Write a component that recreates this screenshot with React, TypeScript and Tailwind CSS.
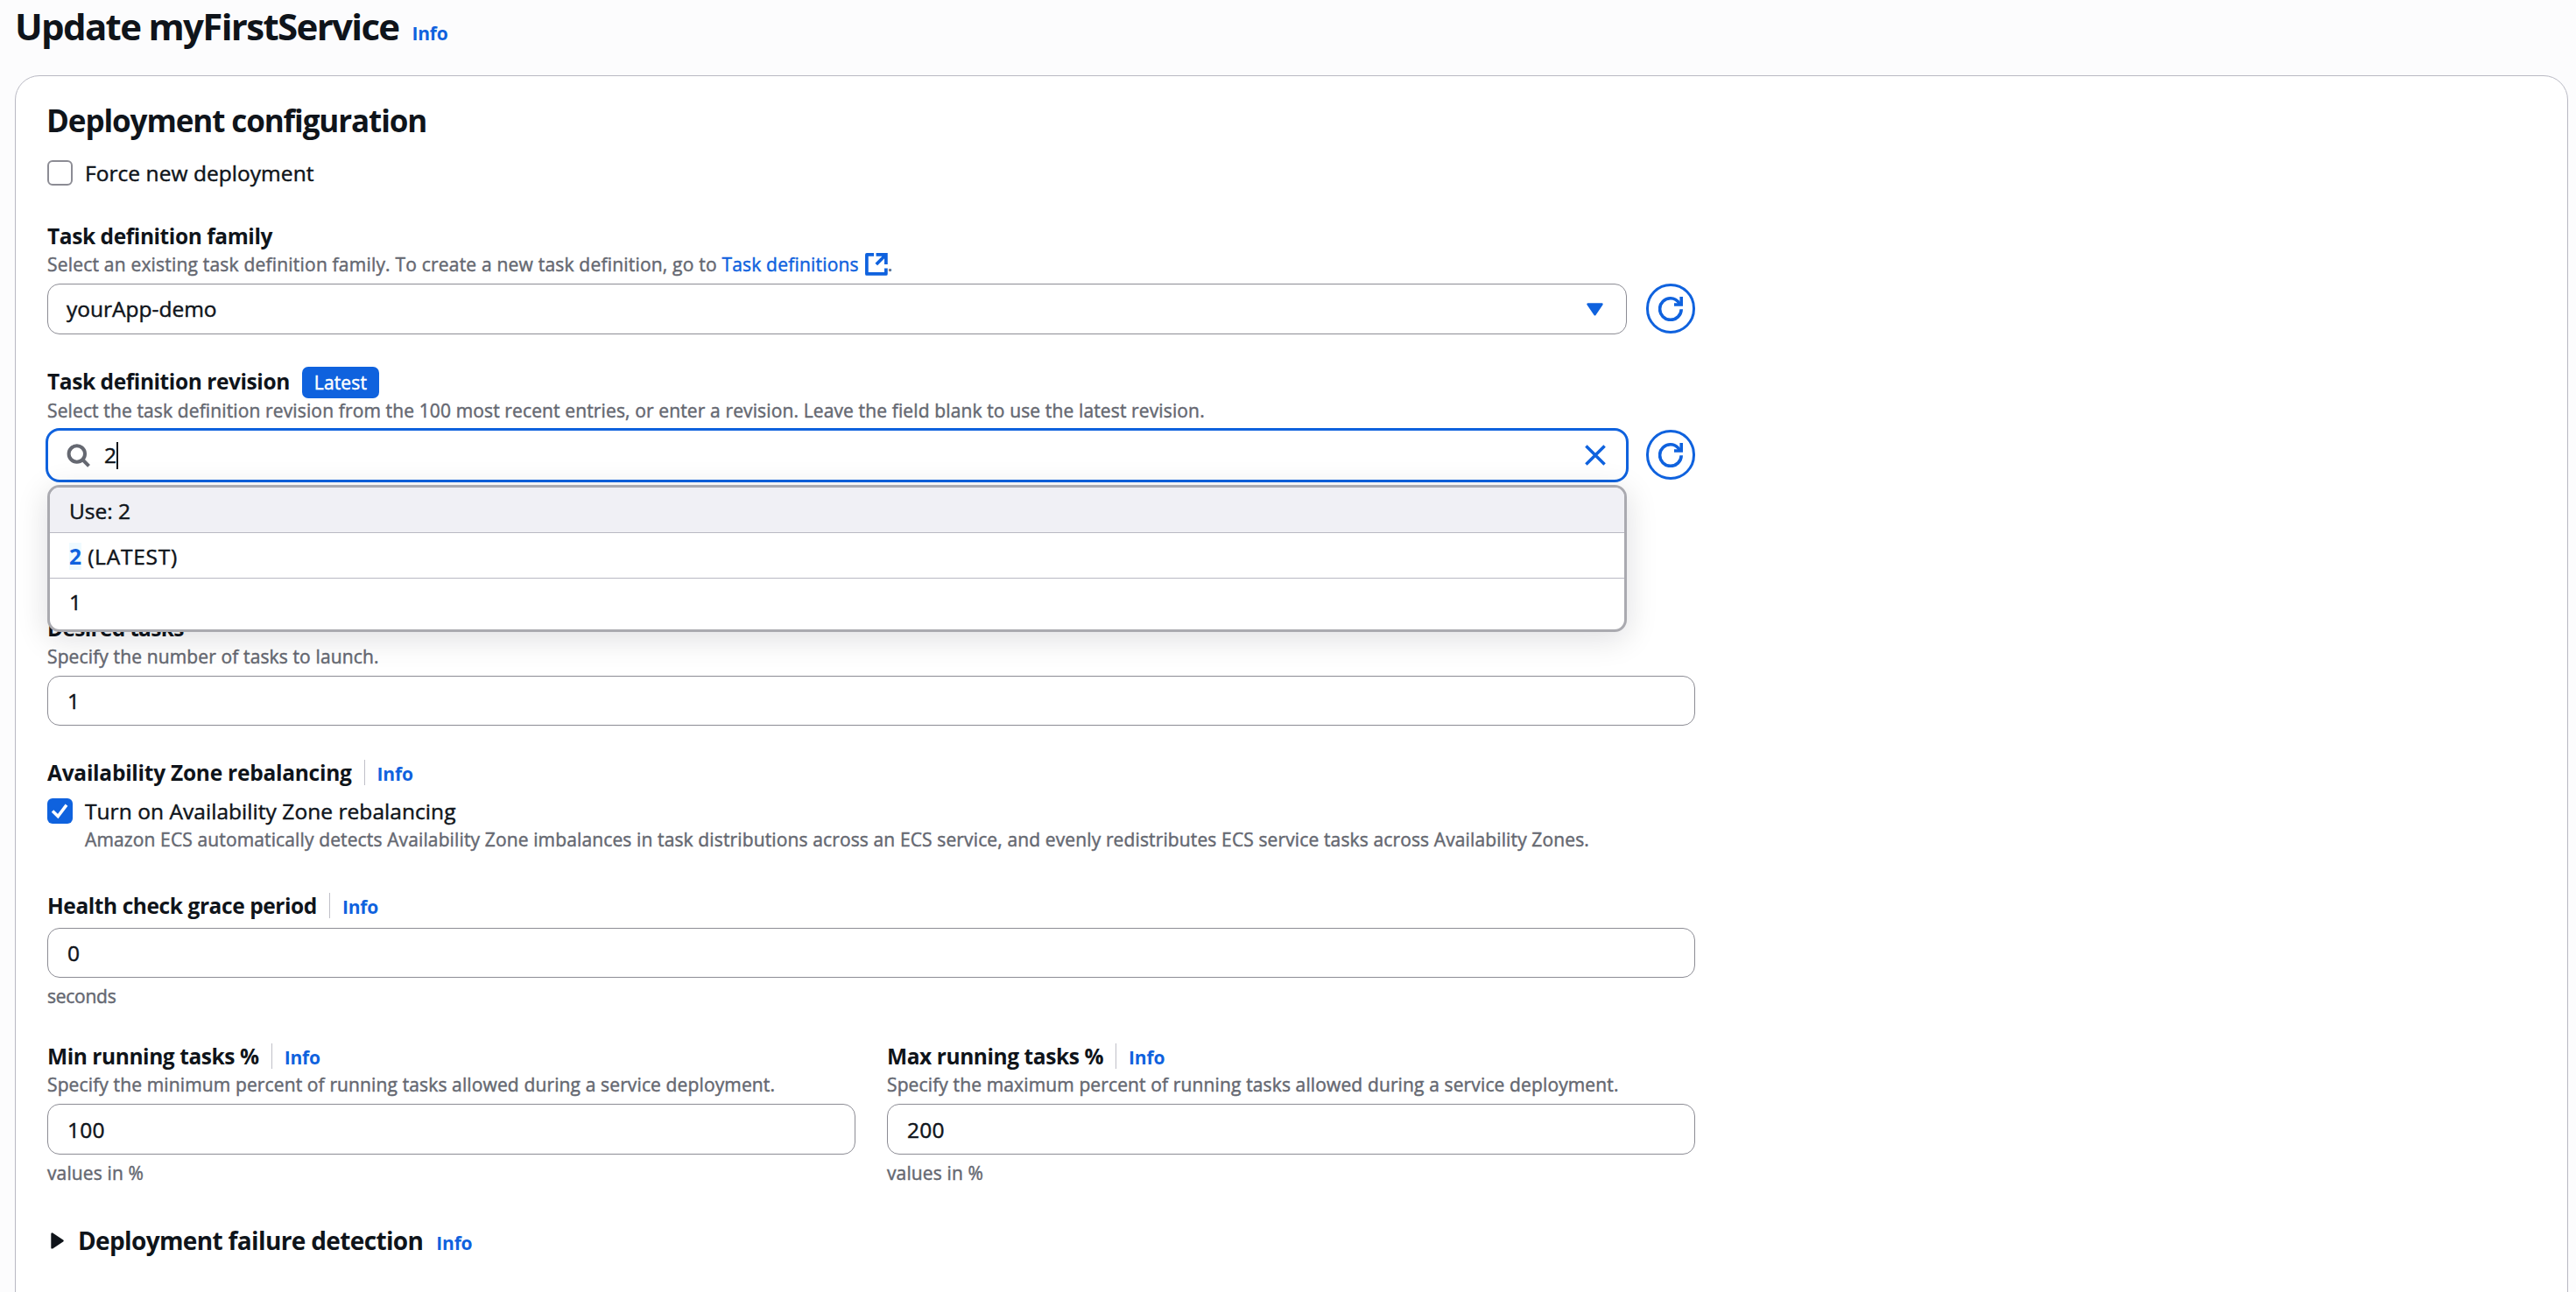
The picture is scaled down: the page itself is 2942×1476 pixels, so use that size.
import { useState, type ReactNode } from 'react'
import clsx from 'clsx'

const OPTIONS = [
  { match: '', text: 'Use: 2' },
  { match: '2', text: ' (LATEST)' },
  { match: '', text: '1' },
]

function ExternalIcon() {
  return (
    <svg
      viewBox="0 0 26 26"
      className="ml-[7px] inline-block h-[26px] w-[26px] align-[-5px]"
      fill="none"
      stroke="currentColor"
      strokeWidth="3.7"
      strokeLinejoin="round"
    >
      <path d="M10 1.9H1.9v22h22v-6.4" />
      <path d="M12.6 1.9h11.3V13M23.5 2.3 12.8 13" strokeLinejoin="miter" />
    </svg>
  )
}

function SearchIcon() {
  return (
    <svg
      viewBox="0 0 28 28"
      className="h-7 w-7 shrink-0 text-[#656871]"
      fill="none"
      stroke="currentColor"
      strokeWidth="4"
    >
      <circle cx="12.8" cy="12.5" r="9.2" />
      <path d="m19.2 19 7.3 7.3" />
    </svg>
  )
}

function CloseIcon() {
  return (
    <svg
      viewBox="0 0 24 24"
      className="h-6 w-6 shrink-0 text-[#0f62de]"
      fill="none"
      stroke="currentColor"
      strokeWidth="3.5"
    >
      <path d="m1.4 1.4 21.2 21.2M22.6 1.4 1.4 22.6" />
    </svg>
  )
}

function CaretDown() {
  return (
    <svg
      viewBox="0 0 19 15"
      className="h-[15px] w-[19px] shrink-0 text-[#0f62de]"
      fill="currentColor"
      stroke="currentColor"
      strokeWidth="2.4"
      strokeLinejoin="round"
    >
      <path d="M1.5 1.5h16l-8 11.8z" />
    </svg>
  )
}

function RefreshButton({ className }: { className?: string }) {
  return (
    <button
      className={clsx(
        'flex h-[57px] w-14 shrink-0 items-center justify-center rounded-full border-[3px] border-[#0f62de] text-[#0f62de]',
        className,
      )}
      aria-label="Refresh"
    >
      <svg
        viewBox="0 0 28 28"
        className="h-7 w-7"
        fill="none"
        stroke="currentColor"
        strokeWidth="3.6"
      >
        <path d="M26.2 14.2A12.3 12.3 0 1 1 14 1.8c4.6 0 7.4 2 10.4 6.2" />
        <path d="M26.2 0v9H18" />
      </svg>
    </button>
  )
}

function Info() {
  return (
    <a className="text-[21px] font-bold leading-7 tracking-[-0.2px] text-[#0f62de] [-webkit-text-stroke:0]">
      Info
    </a>
  )
}

function Label({
  children,
  info,
  className,
  tracking = 'tracking-[-0.42px]',
}: {
  children: ReactNode
  info?: boolean
  className?: string
  tracking?: string
}) {
  return (
    <div className={clsx('flex h-[35px] items-baseline', className)}>
      <span
        className={clsx(
          'text-[24.5px] font-bold leading-[35px] [-webkit-text-stroke:0]',
          tracking,
        )}
      >
        {children}
      </span>
      {info && (
        <>
          <span className="mx-3.5 h-[29px] w-px self-center bg-[#c0c0c8]" />
          <Info />
        </>
      )}
    </div>
  )
}

function Hint({
  children,
  className,
  tracking = 'tracking-[0.13px]',
}: {
  children: ReactNode
  className?: string
  tracking?: string
}) {
  return (
    <div
      className={clsx(
        'h-7 whitespace-nowrap text-[21px] leading-7 text-[#656871]',
        tracking,
        className,
      )}
    >
      {children}
    </div>
  )
}

function Field({ value, className }: { value: string; className?: string }) {
  return (
    <div
      className={clsx(
        'mt-2 flex items-center rounded-[14px] border border-[#8c8c94] bg-white px-[22px] tracking-[0.3px]',
        className,
      )}
    >
      {value}
    </div>
  )
}

function Checkbox({
  checked,
  children,
}: {
  checked?: boolean
  children: ReactNode
}) {
  return (
    <label className="flex h-[35px] items-center">
      <span
        className={clsx(
          'flex h-[29px] w-[29px] items-center justify-center rounded-[6px]',
          checked ? 'bg-[#0f62de]' : 'border-2 border-[#8c8c94] bg-white',
        )}
      >
        {checked && (
          <svg
            viewBox="0 0 29 29"
            className="h-[29px] w-[29px]"
            fill="none"
            stroke="white"
            strokeWidth="3.5"
          >
            <path d="m6 14.6 6.2 6L22 7.6" />
          </svg>
        )}
      </span>
      <span className="ml-3.5 tracking-[0.05px]">{children}</span>
    </label>
  )
}

function RevisionSearch() {
  const [active] = useState(0)

  return (
    <div className="relative -ml-0.5 w-[1808px] shrink-0">
      <div className="flex h-[62px] items-center rounded-[16px] border-[3px] border-[#0f62de] bg-white pl-5 pr-[23px]">
        <SearchIcon />
        <span className="-mt-0.5 ml-4">2</span>
        <span className="h-[31px] w-0.5 bg-[#0f141a]" />
        <span className="grow" />
        <CloseIcon />
      </div>
      <ul className="absolute left-0.5 top-[65px] z-10 h-[168px] w-[1804px] overflow-hidden rounded-[14px] border-[3px] border-[#aaaab0] bg-white shadow-[0_7px_35px_2px_rgba(0,7,22,0.12)]">
        {OPTIONS.map((o, i) => (
          <li
            key={o.text}
            className={clsx(
              'flex h-[52px] items-center whitespace-pre pl-[22px] pt-px',
              i < OPTIONS.length - 1 && 'border-b border-[#b9b9c3]',
              i === active && 'bg-[#f0f0f5]',
            )}
          >
            {o.match && (
              <span className="bg-[#effaff] font-bold leading-[31px] text-[#0f62de] [-webkit-text-stroke:0]">
                {o.match}
              </span>
            )}
            <span className={clsx(o.match && 'tracking-[0.75px]')}>
              {o.text}
            </span>
          </li>
        ))}
      </ul>
    </div>
  )
}

export default function App() {
  return (
    <div className="flex h-[1476px] w-[2942px] flex-col overflow-hidden bg-[#fcfcfd] font-['Open_Sans',sans-serif] text-[24.5px] leading-[35px] text-[#0f141a] [-webkit-text-stroke:0.45px]">
      <header className="flex h-[86px] shrink-0 items-baseline gap-[15px] pl-[17px]">
        <h1 className="text-[42px] font-bold leading-[59px] tracking-[-1.67px] [-webkit-text-stroke:0]">
          Update myFirstService
        </h1>
        <Info />
      </header>

      <main className="ml-[17px] mr-[9px] h-[1500px] shrink-0 rounded-[28px] border border-[#b9b9c3] bg-white pl-9 pt-[29px]">
        <div className="w-[1882px]">
          <h2 className="-ml-px text-[35px] font-bold leading-[44px] tracking-[-1.1px] [-webkit-text-stroke:0]">
            Deployment configuration
          </h2>

          <div className="mt-5">
            <Checkbox>Force new deployment</Checkbox>
          </div>

          <Label className="mt-[37px]">Task definition family</Label>
          <Hint className="mt-px" tracking="tracking-[0.2px]">
            Select an existing task definition family. To create a new task
            definition, go to{' '}
            <a className="text-[#0f62de]">
              Task definitions
              <ExternalIcon />
            </a>
            .
          </Hint>
          <div className="mt-2 flex">
            <div className="flex h-[58px] w-[1804px] shrink-0 items-center justify-between rounded-[14px] border border-[#8c8c94] bg-white pl-[21px] pr-[26px]">
              <span className="-mt-0.5">yourApp-demo</span>
              <CaretDown />
            </div>
            <RefreshButton className="ml-[22px]" />
          </div>

          <div className="mt-9 flex h-[34px]">
            <Label>Task definition revision</Label>
            <span className="ml-3.5 mt-px h-9 rounded-[7px] bg-[#0f62de] px-3.5 text-[21px] leading-9 tracking-[0.13px] text-white">
              Latest
            </span>
          </div>
          <Hint className="mt-[3px]">
            Select the task definition revision from the 100 most recent
            entries, or enter a revision. Leave the field blank to use the
            latest revision.
          </Hint>
          <div className="mt-1.5 flex">
            <RevisionSearch />
            <RefreshButton className="ml-5 mt-0.5" />
          </div>

          <Label className="mt-[149px]" tracking="tracking-[-0.7px]">
            Desired tasks
          </Label>
          <Hint className="mt-px">Specify the number of tasks to launch.</Hint>
          <Field value="1" className="h-[57px]" />

          <Label info className="mt-9" tracking="tracking-[-0.25px]">
            Availability Zone rebalancing
          </Label>
          <div className="mt-[9px]">
            <Checkbox checked>Turn on Availability Zone rebalancing</Checkbox>
            <Hint className="ml-[43px] mt-px">
              Amazon ECS automatically detects Availability Zone imbalances in
              task distributions across an ECS service, and evenly
              redistributes ECS service tasks across Availability Zones.
            </Hint>
          </div>

          <Label info className="mt-11">
            Health check grace period
          </Label>
          <Field value="0" className="h-[57px]" />
          <Hint className="mt-[7px]" tracking="tracking-[-0.25px]">
            seconds
          </Hint>

          <div className="mt-[37px] grid grid-cols-2 gap-9">
            <div>
              <Label info>Min running tasks %</Label>
              <Hint className="mt-px">
                Specify the minimum percent of running tasks allowed during a
                service deployment.
              </Hint>
              <Field value="100" className="h-[58px]" />
              <Hint className="mt-[7px]">values in %</Hint>
            </div>
            <div>
              <Label info>Max running tasks %</Label>
              <Hint className="mt-px">
                Specify the maximum percent of running tasks allowed during a
                service deployment.
              </Hint>
              <Field value="200" className="h-[58px]" />
              <Hint className="mt-[7px]">values in %</Hint>
            </div>
          </div>

          <div className="mt-[46px] flex h-[35px] items-baseline">
            <svg
              viewBox="0 0 15 19"
              className="ml-1 mr-4 mt-2 h-[19px] w-[15px] self-start"
              fill="currentColor"
              stroke="currentColor"
              strokeWidth="2.4"
              strokeLinejoin="round"
            >
              <path d="M1.5 1.6v15.8l12-7.9z" />
            </svg>
            <h3 className="mr-[15px] text-[28px] font-bold leading-[35px] tracking-[-0.64px] [-webkit-text-stroke:0]">
              Deployment failure detection
            </h3>
            <Info />
          </div>
        </div>
      </main>
    </div>
  )
}
